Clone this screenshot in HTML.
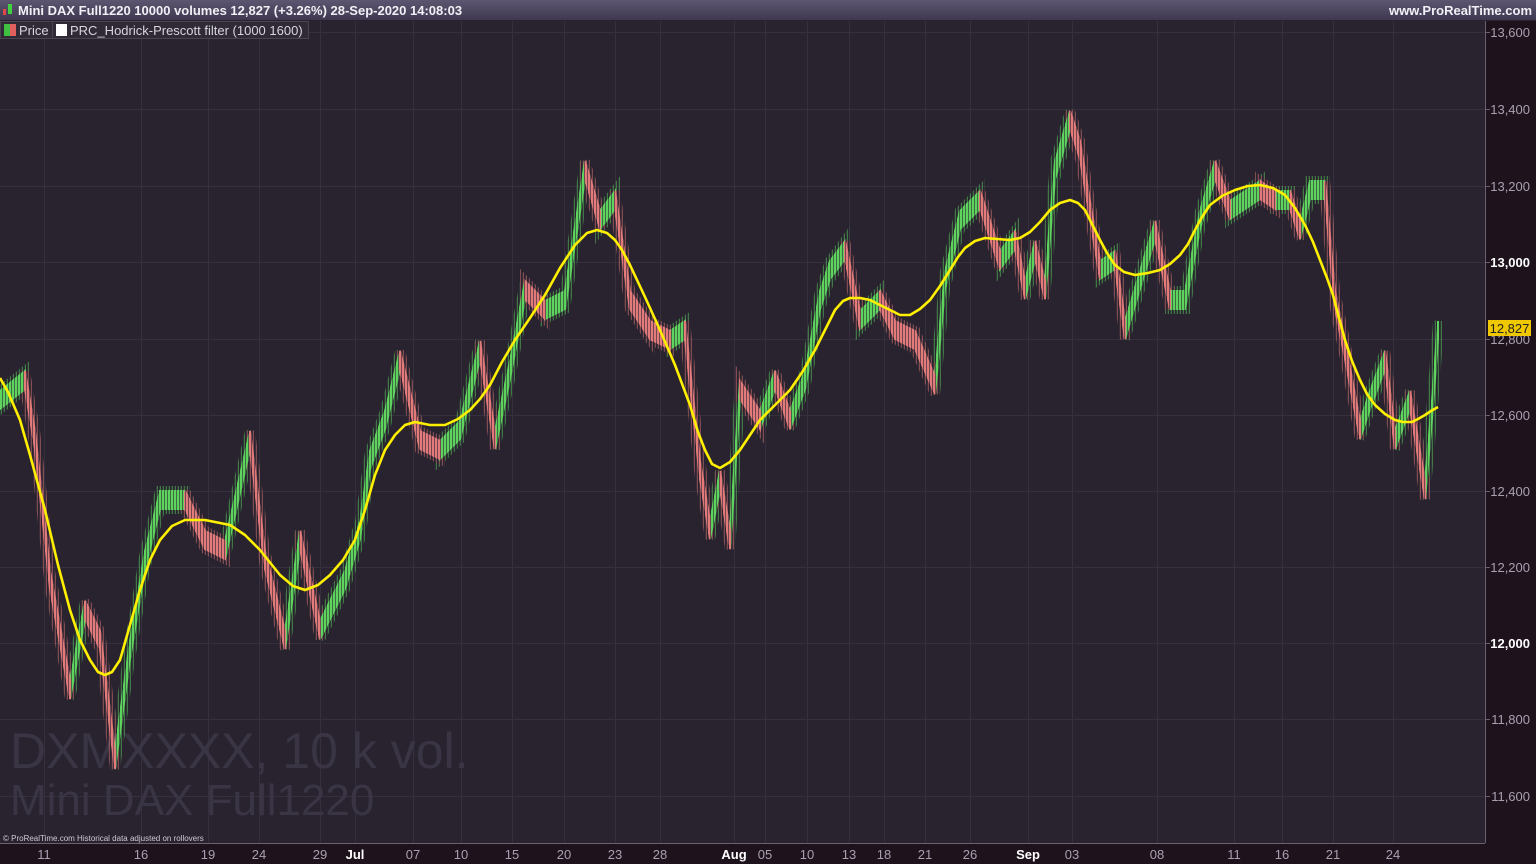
<!DOCTYPE html>
<html><head><meta charset="utf-8"><style>
html,body{margin:0;padding:0;background:#28232f;overflow:hidden}
svg{display:block}
text{font-family:"Liberation Sans",sans-serif}
</style></head><body>
<svg width="1536" height="864" viewBox="0 0 1536 864" xmlns="http://www.w3.org/2000/svg">
<defs>
<linearGradient id="tb" x1="0" y1="0" x2="0" y2="1"><stop offset="0" stop-color="#5d5670"/><stop offset="1" stop-color="#3f3850"/></linearGradient>
<pattern id="st" x="0" y="0" width="3" height="10" patternUnits="userSpaceOnUse"><rect x="0" y="0" width="2.4" height="10" fill="#fff"/></pattern>
<pattern id="st2" x="0" y="0" width="3" height="10" patternUnits="userSpaceOnUse"><rect x="0.8" y="0" width="1" height="10" fill="#fff"/></pattern>
<mask id="m1" maskUnits="userSpaceOnUse" x="0" y="0" width="1536" height="864"><rect width="1536" height="864" fill="url(#st)"/></mask>
<mask id="m2" maskUnits="userSpaceOnUse" x="0" y="0" width="1536" height="864"><rect width="1536" height="864" fill="url(#st2)"/></mask>
<path id="gp" d="M0 391L25 371L25 389L0 409Z M70 681L85 601L85 619L70 699Z M115 751L130 641L130 659L115 769Z M130 641L145 551L145 569L130 659Z M145 551L160 491L160 509L145 569Z M160 491L185 491L185 509L160 509Z M225 541L250 431L250 449L225 559Z M285 631L300 531L300 549L285 649Z M320 621L345 571L345 589L320 639Z M345 571L360 521L360 539L345 589Z M360 521L370 451L370 469L360 539Z M370 451L385 411L385 429L370 469Z M385 411L400 351L400 369L385 429Z M440 441L460 421L460 439L440 459Z M460 421L480 341L480 359L460 439Z M495 431L510 361L510 379L495 449Z M510 361L525 281L525 299L510 379Z M545 301L565 291L565 309L545 319Z M565 291L585 161L585 179L565 309Z M600 211L615 191L615 209L600 229Z M670 331L685 321L685 339L670 349Z M710 521L720 471L720 489L710 539Z M730 531L740 381L740 399L730 549Z M760 411L775 371L775 389L760 429Z M790 411L805 371L805 389L790 429Z M805 371L820 291L820 309L805 389Z M820 291L830 261L830 279L820 309Z M830 261L845 241L845 259L830 279Z M860 311L880 291L880 309L860 329Z M935 376L945 271L945 289L935 394Z M945 271L960 211L960 229L945 289Z M960 211L980 191L980 209L960 229Z M1000 251L1015 231L1015 249L1000 269Z M1025 281L1035 241L1035 259L1025 299Z M1045 281L1055 161L1055 179L1045 299Z M1055 161L1070 111L1070 129L1055 179Z M1100 261L1115 251L1115 269L1100 279Z M1125 321L1140 271L1140 289L1125 339Z M1140 271L1155 221L1155 239L1140 289Z M1170 291L1185 291L1185 309L1170 309Z M1185 291L1200 211L1200 229L1185 309Z M1200 211L1215 161L1215 179L1200 229Z M1230 201L1245 191L1245 209L1230 219Z M1245 191L1260 181L1260 199L1245 209Z M1275 191L1290 191L1290 209L1275 209Z M1300 221L1310 181L1310 199L1300 239Z M1310 181L1325 181L1325 199L1310 199Z M1360 421L1370 391L1370 409L1360 439Z M1370 391L1385 351L1385 369L1370 409Z M1395 431L1410 391L1410 409L1395 449Z M1425 481L1432 401L1432 419L1425 499Z M1432 401L1438 321L1438 339L1432 419Z"/>
<path id="rp" d="M25 371L35 431L35 449L25 389Z M35 431L50 571L50 589L35 449Z M50 571L70 681L70 699L50 589Z M85 601L100 631L100 649L85 619Z M100 631L115 751L115 769L100 649Z M185 491L205 531L205 549L185 509Z M205 531L225 541L225 559L205 549Z M250 431L265 551L265 569L250 449Z M265 551L285 631L285 649L265 569Z M300 531L320 621L320 639L300 549Z M400 351L420 431L420 449L400 369Z M420 431L440 441L440 459L420 449Z M480 341L495 431L495 449L480 359Z M525 281L545 301L545 319L525 299Z M585 161L600 211L600 229L585 179Z M615 191L630 291L630 309L615 209Z M630 291L650 321L650 339L630 309Z M650 321L670 331L670 349L650 339Z M685 321L700 461L700 479L685 339Z M700 461L710 521L710 539L700 479Z M720 471L730 531L730 549L720 489Z M740 381L760 411L760 429L740 399Z M775 371L790 411L790 429L775 389Z M845 241L860 311L860 329L845 259Z M880 291L895 321L895 339L880 309Z M895 321L915 331L915 349L895 339Z M915 331L935 376L935 394L915 349Z M980 191L1000 251L1000 269L980 209Z M1015 231L1025 281L1025 299L1015 249Z M1035 241L1045 281L1045 299L1035 259Z M1070 111L1080 141L1080 159L1070 129Z M1080 141L1090 201L1090 219L1080 159Z M1090 201L1100 261L1100 279L1090 219Z M1115 251L1125 321L1125 339L1115 269Z M1155 221L1170 291L1170 309L1155 239Z M1215 161L1230 201L1230 219L1215 179Z M1260 181L1275 191L1275 209L1260 199Z M1290 191L1300 221L1300 239L1290 209Z M1325 181L1335 291L1335 309L1325 199Z M1335 291L1345 341L1345 359L1335 309Z M1345 341L1360 421L1360 439L1345 359Z M1385 351L1395 431L1395 449L1385 369Z M1410 391L1425 481L1425 499L1410 409Z"/>
</defs>
<rect x="0" y="0" width="1536" height="864" fill="#28232f"/>
<g stroke="#36303e" stroke-width="1">
<line x1="0" y1="32.5" x2="1485" y2="32.5"/><line x1="0" y1="109.5" x2="1485" y2="109.5"/><line x1="0" y1="186.5" x2="1485" y2="186.5"/><line x1="0" y1="262.5" x2="1485" y2="262.5"/><line x1="0" y1="339.5" x2="1485" y2="339.5"/><line x1="0" y1="415.5" x2="1485" y2="415.5"/><line x1="0" y1="491.5" x2="1485" y2="491.5"/><line x1="0" y1="567.5" x2="1485" y2="567.5"/><line x1="0" y1="643.5" x2="1485" y2="643.5"/><line x1="0" y1="719.5" x2="1485" y2="719.5"/><line x1="0" y1="796.5" x2="1485" y2="796.5"/>
<line x1="44.5" y1="21" x2="44.5" y2="843"/><line x1="141.5" y1="21" x2="141.5" y2="843"/><line x1="208.5" y1="21" x2="208.5" y2="843"/><line x1="259.5" y1="21" x2="259.5" y2="843"/><line x1="320.5" y1="21" x2="320.5" y2="843"/><line x1="355.5" y1="21" x2="355.5" y2="843"/><line x1="413.5" y1="21" x2="413.5" y2="843"/><line x1="461.5" y1="21" x2="461.5" y2="843"/><line x1="512.5" y1="21" x2="512.5" y2="843"/><line x1="564.5" y1="21" x2="564.5" y2="843"/><line x1="615.5" y1="21" x2="615.5" y2="843"/><line x1="660.5" y1="21" x2="660.5" y2="843"/><line x1="734.5" y1="21" x2="734.5" y2="843"/><line x1="765.5" y1="21" x2="765.5" y2="843"/><line x1="807.5" y1="21" x2="807.5" y2="843"/><line x1="849.5" y1="21" x2="849.5" y2="843"/><line x1="884.5" y1="21" x2="884.5" y2="843"/><line x1="925.5" y1="21" x2="925.5" y2="843"/><line x1="970.5" y1="21" x2="970.5" y2="843"/><line x1="1028.5" y1="21" x2="1028.5" y2="843"/><line x1="1072.5" y1="21" x2="1072.5" y2="843"/><line x1="1157.5" y1="21" x2="1157.5" y2="843"/><line x1="1234.5" y1="21" x2="1234.5" y2="843"/><line x1="1282.5" y1="21" x2="1282.5" y2="843"/><line x1="1333.5" y1="21" x2="1333.5" y2="843"/><line x1="1393.5" y1="21" x2="1393.5" y2="843"/>
</g>
<text x="10" y="768" font-size="50" fill="#3a3545">DXMXXXX, 10 k vol.</text>
<text x="10" y="815" font-size="44" fill="#3a3545">Mini DAX Full1220</text>
<g mask="url(#m2)" opacity="0.6">
<use href="#gp" fill="#5ed35e" stroke="#5ed35e" stroke-width="10"/>
<use href="#rp" fill="#e37b7b" stroke="#e37b7b" stroke-width="10"/>
</g>
<g mask="url(#m1)">
<use href="#gp" fill="#5ed35e" stroke="#5ed35e" stroke-width="2"/>
<use href="#rp" fill="#e37b7b" stroke="#e37b7b" stroke-width="2"/>
</g>
<path fill="none" stroke="#ffef00" stroke-width="2.6" stroke-linejoin="round" d="M0 378L8 392L20 420L30 455L45 510L58 565L70 610L80 640L90 660L98 672L105 675L112 672L120 660L130 625L140 590L150 560L160 540L172 526L185 520L205 520L230 525L245 535L260 550L272 565L280 575L293 586L305 590L318 585L330 575L343 560L355 540L365 510L375 475L385 450L395 435L405 425L415 422L430 425L445 425L458 419L470 410L480 399L490 385L502 362L515 340L530 318L545 295L560 268L575 245L587 233L597 230L607 233L615 240L622 250L630 265L645 297L660 330L675 365L690 405L698 432L705 450L712 464L720 468L730 462L740 450L750 435L760 420L775 405L790 390L803 371L815 350L826 328L835 310L843 301L850 298L860 298L870 300L880 305L890 310L900 315L910 315L920 309L930 300L940 286L950 270L958 257L965 248L975 241L985 238L997 239L1010 240L1020 238L1030 232L1040 222L1050 210L1060 203L1070 200L1078 203L1085 210L1092 224L1100 240L1107 253L1115 265L1124 272L1135 275L1148 273L1160 270L1170 264L1180 255L1188 244L1195 230L1202 217L1210 205L1222 196L1235 190L1248 186L1260 185L1273 188L1285 195L1295 208L1305 225L1313 242L1320 260L1327 278L1333 295L1339 318L1345 340L1352 361L1360 380L1367 394L1375 405L1385 414L1395 420L1403 422L1412 422L1418 419L1425 415L1431 411L1438 407"/>
<rect x="1485" y="21" width="51" height="843" fill="#1e121d"/>
<line x1="1485.5" y1="21" x2="1485.5" y2="843" stroke="#6a6070"/>
<rect x="0" y="843" width="1536" height="21" fill="#1e121d"/>
<line x1="0" y1="843.5" x2="1485" y2="843.5" stroke="#6a6070"/>
<g stroke="#6a6070">
<line x1="1485" y1="32.5" x2="1490" y2="32.5"/><line x1="1485" y1="109.5" x2="1490" y2="109.5"/><line x1="1485" y1="186.5" x2="1490" y2="186.5"/><line x1="1485" y1="262.5" x2="1490" y2="262.5"/><line x1="1485" y1="339.5" x2="1490" y2="339.5"/><line x1="1485" y1="415.5" x2="1490" y2="415.5"/><line x1="1485" y1="491.5" x2="1490" y2="491.5"/><line x1="1485" y1="567.5" x2="1490" y2="567.5"/><line x1="1485" y1="643.5" x2="1490" y2="643.5"/><line x1="1485" y1="719.5" x2="1490" y2="719.5"/><line x1="1485" y1="796.5" x2="1490" y2="796.5"/>
</g>
<g font-size="13" fill="#a8a0b0" text-anchor="end">
<text x="1530" y="37">13,600</text><text x="1530" y="114">13,400</text><text x="1530" y="191">13,200</text><text x="1530" y="267" font-weight="bold" fill="#fff">13,000</text><text x="1530" y="344">12,800</text><text x="1530" y="420">12,600</text><text x="1530" y="496">12,400</text><text x="1530" y="572">12,200</text><text x="1530" y="648" font-weight="bold" fill="#fff">12,000</text><text x="1530" y="724">11,800</text><text x="1530" y="801">11,600</text>
</g>
<g font-size="13" fill="#a8a0b0" text-anchor="middle">
<text x="44" y="859">11</text><text x="141" y="859">16</text><text x="208" y="859">19</text><text x="259" y="859">24</text><text x="320" y="859">29</text><text x="355" y="859" font-weight="bold" fill="#fff">Jul</text><text x="413" y="859">07</text><text x="461" y="859">10</text><text x="512" y="859">15</text><text x="564" y="859">20</text><text x="615" y="859">23</text><text x="660" y="859">28</text><text x="734" y="859" font-weight="bold" fill="#fff">Aug</text><text x="765" y="859">05</text><text x="807" y="859">10</text><text x="849" y="859">13</text><text x="884" y="859">18</text><text x="925" y="859">21</text><text x="970" y="859">26</text><text x="1028" y="859" font-weight="bold" fill="#fff">Sep</text><text x="1072" y="859">03</text><text x="1157" y="859">08</text><text x="1234" y="859">11</text><text x="1282" y="859">16</text><text x="1333" y="859">21</text><text x="1393" y="859">24</text>
</g>
<rect x="1488" y="320" width="43" height="16" fill="#f0c800"/>
<text x="1509.5" y="333" font-size="13" fill="#222" text-anchor="middle">12,827</text>
<text x="3" y="841" font-size="8" fill="#d0c8d8">© ProRealTime.com  Historical data adjusted on rollovers</text>
<rect x="0" y="0" width="1536" height="20" fill="url(#tb)"/>
<rect x="3" y="9" width="3" height="6" fill="#e04848"/><rect x="8" y="4" width="4" height="10" fill="#40d040"/>
<text x="18" y="15" font-size="13" font-weight="bold" fill="#f2f0f6">Mini DAX Full1220 10000 volumes 12,827 (+3.26%) 28-Sep-2020 14:08:03</text>
<text x="1532" y="15" font-size="13" font-weight="bold" fill="#f2f0f6" text-anchor="end">www.ProRealTime.com</text>
<rect x="0.5" y="21.5" width="308" height="17" fill="#2f2a36" stroke="#4a4452"/>
<line x1="52.5" y1="21" x2="52.5" y2="39" stroke="#4a4452"/>
<rect x="4" y="24" width="6" height="12" fill="#40c040"/><rect x="10" y="24" width="6" height="12" fill="#e06060"/>
<text x="19" y="35" font-size="13" fill="#d8d4dc">Price</text>
<rect x="56" y="24" width="11" height="12" fill="#ffffff"/>
<text x="70" y="35" font-size="13" fill="#d8d4dc">PRC_Hodrick-Prescott filter (1000 1600)</text>
</svg>
</body></html>
